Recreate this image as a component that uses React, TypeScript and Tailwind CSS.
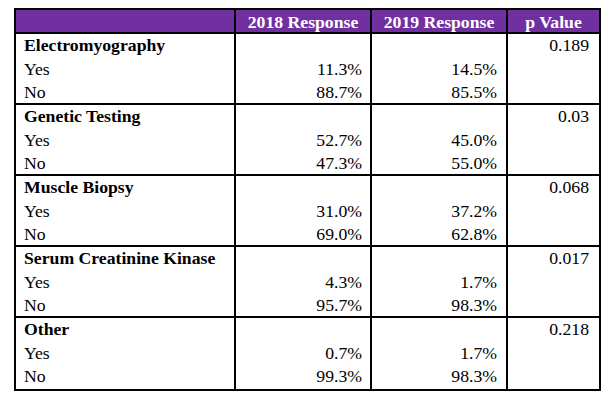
const groups = [
  { name: 'Electromyography', p: '0.189', yes: ['11.3%', '14.5%'], no: ['88.7%', '85.5%'] },
  { name: 'Genetic Testing', p: '0.03', yes: ['52.7%', '45.0%'], no: ['47.3%', '55.0%'] },
  { name: 'Muscle Biopsy', p: '0.068', yes: ['31.0%', '37.2%'], no: ['69.0%', '62.8%'] },
  { name: 'Serum Creatinine Kinase', p: '0.017', yes: ['4.3%', '1.7%'], no: ['95.7%', '98.3%'] },
  { name: 'Other', p: '0.218', yes: ['0.7%', '1.7%'], no: ['99.3%', '98.3%'] },
];

const cols = 'grid grid-cols-[218px_136px_136px_1fr]';

export default function App() {
  return (
    <div className="w-[614px] h-[403px] bg-white pt-[8px] pl-[14px] font-['Liberation_Serif']">
      <div className="w-[587px] border-2 border-black text-[17.7px] leading-[23.7px] text-black">
        {/* Header */}
        <div className={`${cols} h-[24px] bg-[#7030a0] border-b-2 border-black text-white font-bold`}>
          <div />
          <div className="border-l-2 border-black text-center pt-[1px] leading-[22px]">2018 Response</div>
          <div className="border-l-2 border-black text-center pt-[1px] leading-[22px]">2019 Response</div>
          <div className="border-l-2 border-black text-center pt-[1px] leading-[22px]">p Value</div>
        </div>

        {groups.map((g, i) => (
          <div
            key={g.name}
            className={`${cols} h-[71px] ${i < groups.length - 1 ? 'border-b-2 border-black' : ''}`}
          >
            <div className="pl-[8px]">
              <div className="font-bold">{g.name}</div>
              <div>Yes</div>
              <div>No</div>
            </div>
            <div className="border-l-2 border-black text-right pr-[8px]">
              <div>&nbsp;</div>
              <div>{g.yes[0]}</div>
              <div>{g.no[0]}</div>
            </div>
            <div className="border-l-2 border-black text-right pr-[9px]">
              <div>&nbsp;</div>
              <div>{g.yes[1]}</div>
              <div>{g.no[1]}</div>
            </div>
            <div className="border-l-2 border-black text-right pr-[10px]">
              <div>{g.p}</div>
            </div>
          </div>
        ))}
      </div>
    </div>
  );
}
